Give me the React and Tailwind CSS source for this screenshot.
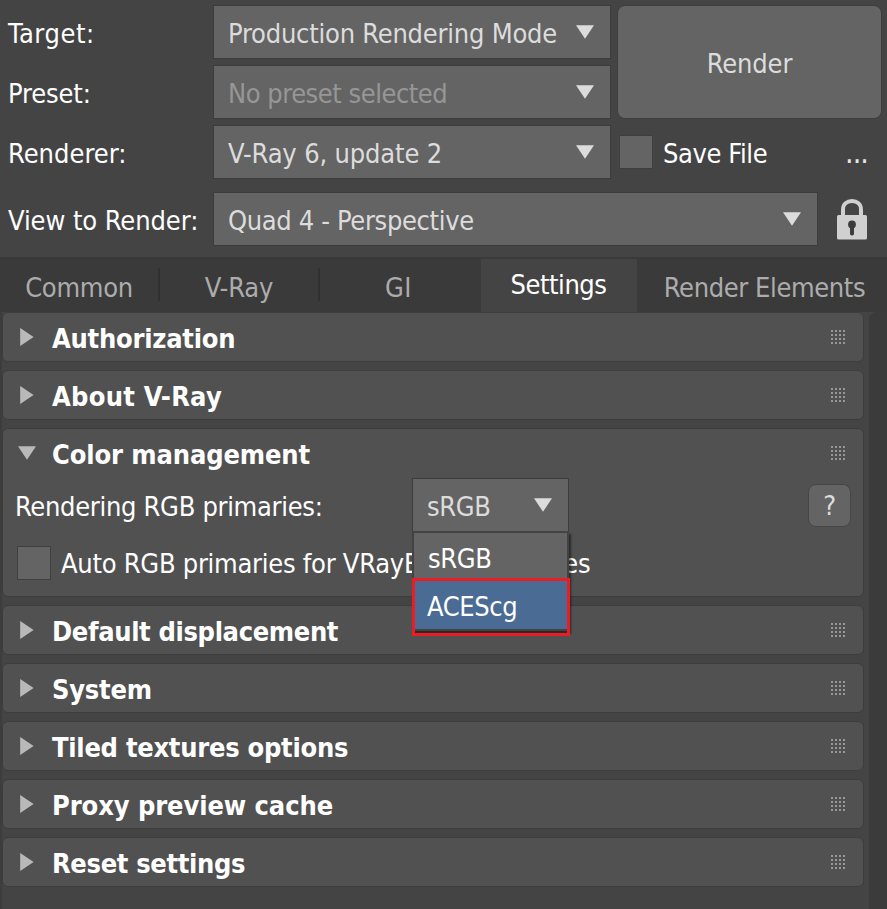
function DownArrow({ className = "fill-[#dcdcdc]" }) {
  return (
    <svg width="18" height="14" viewBox="0 0 18 14" className={`shrink-0 ${className}`}>
      <path d="M0 0.2H18L9 13.8Z" />
    </svg>
  );
}

function RightArrow() {
  return (
    <svg width="14" height="18" viewBox="0 0 14 18" className="shrink-0 fill-[#b9b9b9]">
      <path d="M0.2 0V18L13.6 9Z" />
    </svg>
  );
}

function Lock() {
  return (
    <svg width="30" height="41" viewBox="0 0 30 41" className="shrink-0">
      <path d="M6 17V10.500C6 5 10 2 15 2S24 5 24 10.500V17" fill="none" stroke="#d0d0d0" strokeWidth="4" />
      <rect x="0" y="16" width="30" height="24.500" rx="1.500" fill="#d0d0d0" />
      <circle cx="15" cy="25.500" r="3.900" fill="#3c3c3c" />
      <rect x="13" y="26" width="4" height="10.500" rx="1.800" fill="#3c3c3c" />
    </svg>
  );
}

function Grip() {
  return (
    <div className="grid shrink-0 grid-cols-4 gap-0.5">
      {Array.from({ length: 16 }, (_, i) => (
        <span key={i} className="size-0.5 bg-[#989898]" />
      ))}
    </div>
  );
}

function Select({ children, className, text = "text-[#dcdcdc]" }) {
  return (
    <div className={`flex h-[54px] items-center justify-between border border-[#3c3c3c] bg-[#646464] pr-4 pl-3.5 ${className}`}>
      <span className={`pt-[3px] ${text}`}>{children}</span>
      <DownArrow />
    </div>
  );
}

function Checkbox() {
  return <span className="size-[34px] shrink-0 border border-[#3f3f3f] bg-[#646464]" />;
}

function Rollout({ title, open, tracking = "tracking-[-0.25px]", children }) {
  return (
    <section className="rounded-md border border-[#3d3d3d] bg-[#515151]">
      <header className="flex h-12 items-center pr-[18px]">
        <span className={open ? "w-[49px] pl-[15px]" : "w-[49px] pl-[17px]"}>
          {open ? <DownArrow className="fill-[#b9b9b9]" /> : <RightArrow />}
        </span>
        <h2 className={`flex-1 pt-[3px] font-bold ${tracking}`}>{title}</h2>
        <Grip />
      </header>
      {children}
    </section>
  );
}

function PrimariesSelect() {
  return (
    <div className="relative w-[157px]">
      <Select className="w-[157px]" text="text-[#dcdcdc] tracking-[-0.4px]">sRGB</Select>
      <ul className="absolute top-[53px] left-0 z-10 w-[157px] border-2 border-[#434343] bg-[#646464] tracking-[-0.4px] shadow-[2px_3px_2px_rgba(0,0,0,0.5)]">
        <li className="flex h-12 items-center pt-[3px] pl-3.5">sRGB</li>
        <li className="flex h-12 items-center bg-[#4a6b94] pt-[3px] pl-[13px]">ACEScg</li>
      </ul>
      <div className="absolute top-[100px] left-0 z-20 h-[58px] w-[158px] border-3 border-[#ed1c24]" />
    </div>
  );
}

const labelCls = "w-[205px] shrink-0 pt-[3px]";

export default function App() {
  return (
    <main className="flex h-[909px] w-[887px] flex-col overflow-hidden bg-[#444444] font-['DejaVu_Sans_Condensed','DejaVu_Sans',sans-serif] text-[27px] leading-8 tracking-[-0.15px] whitespace-nowrap text-white">
      <div className="flex h-[257px] shrink-0 flex-col pt-[5px] pl-2">
        <div className="flex">
          <div className="flex flex-col gap-1.5">
            <div className="flex items-center">
              <span className={`${labelCls} tracking-[0.55px]`}>Target:</span>
              <Select className="w-[398px]" text="text-[#dcdcdc] tracking-[-0.23px]">Production Rendering Mode</Select>
            </div>
            <div className="flex items-center">
              <span className={labelCls}>Preset:</span>
              <Select className="w-[398px]" text="text-[#969696] tracking-[-0.48px]">No preset selected</Select>
            </div>
            <div className="flex items-center">
              <span className={`${labelCls} tracking-[0px]`}>Renderer:</span>
              <Select className="w-[398px]">V-Ray 6, update 2</Select>
            </div>
          </div>
          <div className="ml-1.5 flex flex-col gap-1.5">
            <button className="h-[114px] w-[265px] rounded-lg border border-[#3e3e3e] bg-[#646464] pt-[3px] text-[#dcdcdc]">Render</button>
            <div className="flex h-[54px] items-center pr-3.5 pl-0.5">
              <Checkbox />
              <span className="flex-1 pt-[3px] pl-2.5 tracking-[-0.4px]">Save File</span>
              <span className="pt-0.5 text-[30px] tracking-[-0.9px] text-[#e6e6e6]">...</span>
            </div>
          </div>
        </div>
        <div className="mt-[13px] flex items-center">
          <span className={`${labelCls} tracking-[-0.08px]`}>View to Render:</span>
          <Select className="mr-[19px] w-[605px]" text="text-[#dcdcdc] tracking-[-0.35px]">Quad 4 - Perspective</Select>
          <Lock />
        </div>
      </div>

      <nav className="flex h-[55px] shrink-0 items-center bg-[#3a3a3a] text-[#acacac]">
        <span className="w-[158px] pt-[7px] text-center tracking-[-0.3px]">Common</span>
        <span className="h-[33px] w-0.5 bg-[#303030]" />
        <span className="w-[158px] pt-[7px] text-center">V-Ray</span>
        <span className="h-[33px] w-0.5 bg-[#303030]" />
        <span className="w-[161px] pt-[7px] pr-1 text-center tracking-[0.5px]">GI</span>
        <span className="mt-0.5 flex h-[53px] w-[156px] items-center justify-center bg-[#444444] pr-px pb-px tracking-[-0.45px] text-white">Settings</span>
        <span className="flex-1 pt-[7px] pl-[5px] text-center tracking-[-0.4px]">Render Elements</span>
      </nav>

      <div className="flex flex-1 justify-between border-l-2 border-[#3d3d3d]">
        <div className="flex w-[862px] flex-col gap-2">
          <Rollout title="Authorization" />
          <Rollout title="About V-Ray" tracking="tracking-[0.25px]" />
          <Rollout title="Color management" open tracking="tracking-[-0.12px]">
            <div className="flex h-[119px] flex-col">
              <div className="mt-[1px] flex items-center">
                <span className="w-[409px] pt-[3px] pl-3 tracking-[-0.31px]">Rendering RGB primaries:</span>
                <PrimariesSelect />
                <button className="ml-[239px] size-[43px] rounded-lg border border-[#464646] bg-[#646464] pt-[2px] text-[#dcdcdc]">?</button>
              </div>
              <div className="mt-[13px] flex items-center pl-3.5">
                <Checkbox />
                <span className="pt-[3px] pl-2.5 tracking-[-0.27px]">
                  Auto RGB primaries for VRayBitmap <span className="ml-[7px]">images</span>
                </span>
              </div>
            </div>
          </Rollout>
          <Rollout title="Default displacement" tracking="tracking-[-0.35px]" />
          <Rollout title="System" />
          <Rollout title="Tiled textures options" tracking="tracking-[-0.27px]" />
          <Rollout title="Proxy preview cache" tracking="tracking-[-0.09px]" />
          <Rollout title="Reset settings" tracking="tracking-[-0.34px]" />
        </div>
        <div className="w-[18px] rounded-tl-lg bg-[#3b3b3b]" />
      </div>
    </main>
  );
}
